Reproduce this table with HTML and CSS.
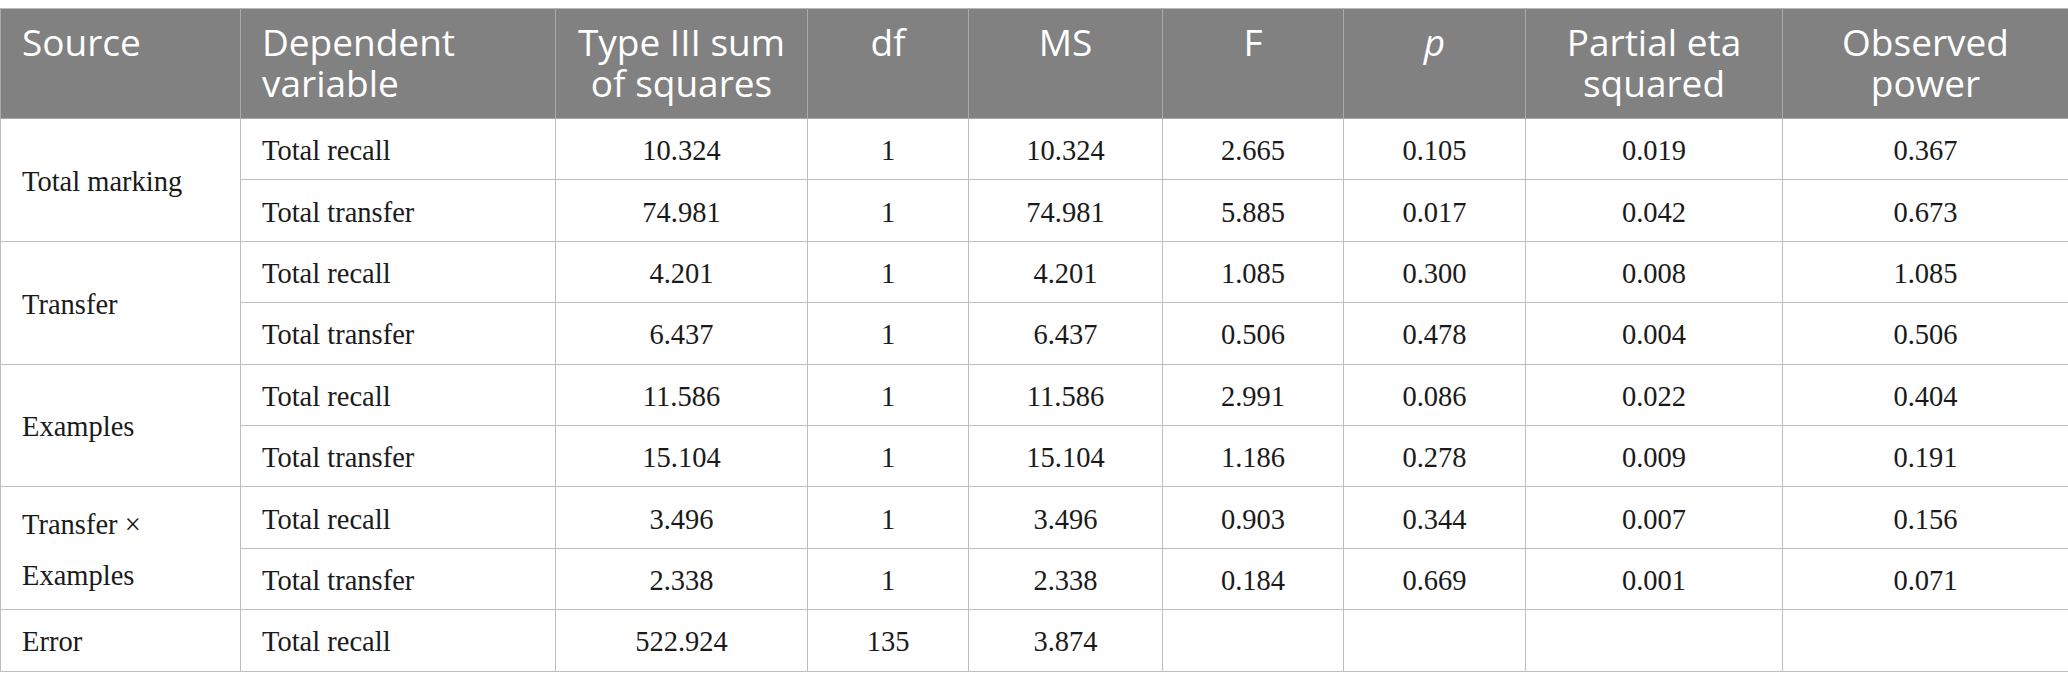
FILE: index.html
```html
<!DOCTYPE html>
<html>
<head>
<meta charset="utf-8">
<link rel="stylesheet" href="styles.css">
</head>
<body>
<table class="anova">
  <colgroup>
    <col class="c1"><col class="c2"><col class="c3"><col class="c4"><col class="c5"><col class="c6"><col class="c7"><col class="c8"><col class="c9">
  </colgroup>
  <thead>
    <tr>
      <th class="left">Source</th>
      <th class="left">Dependent<br>variable</th>
      <th>Type III sum<br>of squares</th>
      <th>df</th>
      <th>MS</th>
      <th>F</th>
      <th><i>p</i></th>
      <th>Partial eta<br>squared</th>
      <th>Observed<br>power</th>
    </tr>
  </thead>
  <tbody>
    <tr>
      <td class="left" rowspan="2">Total marking</td>
      <td class="left">Total recall</td>
      <td>10.324</td><td>1</td><td>10.324</td><td>2.665</td><td>0.105</td><td>0.019</td><td>0.367</td>
    </tr>
    <tr>
      <td class="left">Total transfer</td>
      <td>74.981</td><td>1</td><td>74.981</td><td>5.885</td><td>0.017</td><td>0.042</td><td>0.673</td>
    </tr>
    <tr>
      <td class="left" rowspan="2">Transfer</td>
      <td class="left">Total recall</td>
      <td>4.201</td><td>1</td><td>4.201</td><td>1.085</td><td>0.300</td><td>0.008</td><td>1.085</td>
    </tr>
    <tr>
      <td class="left">Total transfer</td>
      <td>6.437</td><td>1</td><td>6.437</td><td>0.506</td><td>0.478</td><td>0.004</td><td>0.506</td>
    </tr>
    <tr>
      <td class="left" rowspan="2">Examples</td>
      <td class="left">Total recall</td>
      <td>11.586</td><td>1</td><td>11.586</td><td>2.991</td><td>0.086</td><td>0.022</td><td>0.404</td>
    </tr>
    <tr>
      <td class="left">Total transfer</td>
      <td>15.104</td><td>1</td><td>15.104</td><td>1.186</td><td>0.278</td><td>0.009</td><td>0.191</td>
    </tr>
    <tr>
      <td class="left" rowspan="2">Transfer ×<br>Examples</td>
      <td class="left">Total recall</td>
      <td>3.496</td><td>1</td><td>3.496</td><td>0.903</td><td>0.344</td><td>0.007</td><td>0.156</td>
    </tr>
    <tr>
      <td class="left">Total transfer</td>
      <td>2.338</td><td>1</td><td>2.338</td><td>0.184</td><td>0.669</td><td>0.001</td><td>0.071</td>
    </tr>
    <tr>
      <td class="left">Error</td>
      <td class="left">Total recall</td>
      <td>522.924</td><td>135</td><td>3.874</td><td></td><td></td><td></td><td></td>
    </tr>
  </tbody>
</table>
</body>
</html>
```

FILE: styles.css
```css
html, body {
  margin: 0;
  padding: 0;
  background: #ffffff;
}
body {
  padding-top: 8px;
}
.anova {
  border-collapse: collapse;
  table-layout: fixed;
  width: 2068px;
  color: #1a1a1a;
}
.c1 { width: 240px; }
.c2 { width: 315px; }
.c3 { width: 252px; }
.c4 { width: 161px; }
.c5 { width: 194px; }
.c6 { width: 181px; }
.c7 { width: 182px; }
.c8 { width: 257px; }
.c9 { width: 286px; }

.anova th {
  background: #808180;
  color: #ffffff;
  font-family: "Open Sans", "Noto Sans", sans-serif;
  font-weight: 400;
  font-size: 37px;
  line-height: 41px;
  text-align: center;
  vertical-align: top;
  height: 110px;
  box-sizing: border-box;
  padding: 12px 8px 0 8px;
  border: 1px solid #a9a9a9;
  border-top-color: #b8b8b8;
}
.anova th.left {
  text-align: left;
  padding-left: 21px;
}
.anova td {
  font-family: "Liberation Serif", "Times New Roman", serif;
  font-size: 28.5px;
  line-height: 51px;
  text-align: center;
  vertical-align: middle;
  height: 61.4px;
  box-sizing: border-box;
  padding: 3px 10px 0 10px;
  border: 1px solid #bdbdbd;
}
.anova td.left {
  text-align: left;
  padding-left: 21px;
}
```
